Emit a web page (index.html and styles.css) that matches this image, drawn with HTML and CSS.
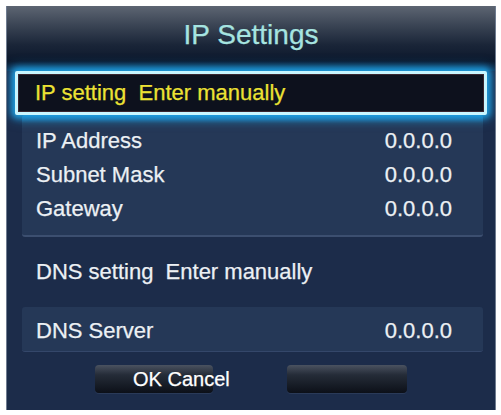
FILE: index.html
```html
<!DOCTYPE html>
<html>
<head>
<meta charset="utf-8">
<link rel="stylesheet" href="styles.css">
</head>
<body>
<div class="dialog">
  <div class="title">IP Settings</div>
  <div class="highlight"><span>IP setting&nbsp;&nbsp;Enter manually</span></div>
  <div class="panel group">
    <div class="row"><span>IP Address</span><span>0.0.0.0</span></div>
    <div class="row"><span>Subnet Mask</span><span>0.0.0.0</span></div>
    <div class="row"><span>Gateway</span><span>0.0.0.0</span></div>
  </div>
  <div class="dns-setting">DNS setting&nbsp;&nbsp;Enter manually</div>
  <div class="panel single">
    <div class="row"><span>DNS Server</span><span>0.0.0.0</span></div>
  </div>
  <div class="buttons">
    <div class="btn first"><span class="btn-label">OK Cancel</span></div>
    <div class="btn second"></div>
  </div>
</div>
</body>
</html>
```
FILE: styles.css
```css
html, body {
  margin: 0;
  padding: 0;
  background: #ffffff;
}
body {
  font-family: "Liberation Sans", Arial, sans-serif;
  -webkit-text-stroke: 0.25px currentColor;
}
.dialog {
  margin: 6px 0 0 6px;
  width: 490px;
  height: 404px;
  box-sizing: border-box;
  background: #1c2c4a;
  border-left: 1px solid #6f7c90;
  border-right: 1px solid #6f7c90;
  display: flex;
  flex-direction: column;
  overflow: hidden;
}
.title {
  height: 65px;
  flex: none;
  display: flex;
  align-items: flex-start;
  justify-content: center;
  padding-top: 13px;
  box-sizing: border-box;
  color: #a6e4e0;
  font-size: 28px;
  background: linear-gradient(to bottom, #5d6572 0%, #3a4454 30%, #1a2538 60%, #0c182c 85%, #123a5e 100%);
}
.highlight {
  flex: none;
  margin: 0 8px 0 8px;
  height: 44px;
  box-sizing: border-box;
  border: 3px solid #c8f6ff;
  border-radius: 2px;
  background: #0d111d;
  box-shadow: 0 0 6px 3px #1e9fe0, 0 0 12px 4px rgba(30,150,220,0.55), inset 0 0 0 1px #3a2630;
  display: flex;
  align-items: center;
  padding-left: 17px;
  color: #ece234;
  font-size: 22px;
  position: relative;
  z-index: 1;
}
.panel {
  flex: none;
  margin: 0 12px 0 15px;
  background: #253857;
  box-sizing: border-box;
  padding: 0 31px 0 14px;
  color: #ecf0f4;
  font-size: 22px;
  border-radius: 3px;
}
.group {
  height: 122px;
  padding-top: 9px;
  border-bottom: 2px solid #3c4f70;
  background: linear-gradient(to bottom, #1f6fa8 0px, #25405f 8px, #253857 14px);
}
.row {
  height: 34px;
  display: flex;
  align-items: center;
  justify-content: space-between;
}
.dns-setting {
  flex: none;
  height: 70px;
  display: flex;
  align-items: center;
  padding-left: 29px;
  color: #ecf0f4;
  font-size: 22px;
}
.single {
  height: 45px;
  display: flex;
  flex-direction: column;
  justify-content: center;
  padding-top: 3px;
  border-bottom: 1px solid #34476a;
}
.buttons {
  flex: none;
  display: flex;
  margin-top: 13px;
  padding-left: 88px;
  gap: 74px;
}
.btn {
  height: 28px;
  border-radius: 4px;
  background: linear-gradient(to bottom, #4a5260 0%, #252c38 35%, #0c1018 100%);
  box-shadow: 0 1px 0 #2a3a58;
  display: flex;
  align-items: center;
}
.first {
  width: 118px;
}
.second {
  width: 120px;
}
.btn-label {
  color: #ffffff;
  font-size: 20px;
  margin-left: 38px;
  white-space: nowrap;
}
```
